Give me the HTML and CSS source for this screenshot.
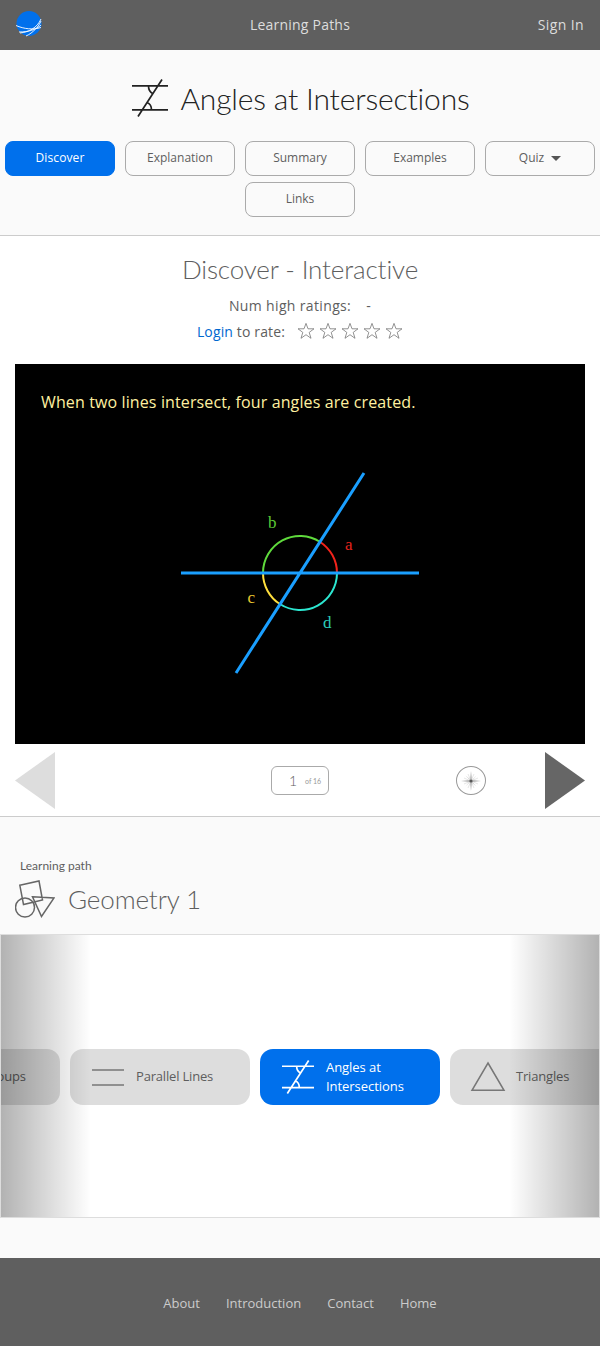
FILE: index.html
```html
<!DOCTYPE html>
<html lang="en">
<head>
<meta charset="utf-8">
<title>Angles at Intersections</title>
<link rel="stylesheet" href="styles.css">
</head>
<body>
<svg class="defs" width="0" height="0">
  <symbol id="angles" viewBox="0 0 36 38">
    <path d="M0 6.9H36M0 30.9H36M6 37.5L30 .5M16.500 7C16.500 10.500 18 13 20.500 14.500M19.500 31C19.500 28 18 24.500 15 23.500"/>
  </symbol>
  <symbol id="star" viewBox="0 0 18 18">
    <path d="M9 1.400L11 6.800H17L12.200 10.400L14 16.300L9 12.700L4 16.300L5.800 10.400L1 6.800H7Z"/>
  </symbol>
</svg>
<header class="topbar">
  <svg class="logo" viewBox="0 0 26 26">
    <circle cx="13" cy="12.500" r="12.500"/>
    <path d="M0 14.500C8 18 17 19 25 16.500M3 21C12 21 20 19 25 14M4 22C13 21 21 17 25 8M10 25C17 22 23 15 25 10"/>
  </svg>
  <a class="paths">Learning Paths</a>
  <a class="signin">Sign In</a>
</header>
<section class="intro">
  <div class="title"><svg class="title-icon"><use href="#angles"/></svg><h1>Angles at Intersections</h1></div>
  <nav class="tabs">
    <a class="tab active">Discover</a><a class="tab">Explanation</a><a class="tab">Summary</a><a class="tab">Examples</a><a class="tab">Quiz<i class="caret"></i></a><a class="tab">Links</a>
  </nav>
</section>
<main class="lesson">
  <h2>Discover - Interactive</h2>
  <p class="ratings"><span>Num high ratings:</span><span>-</span></p>
  <div class="rate"><span><a>Login</a> to rate:</span>
    <div class="stars"><svg><use href="#star"/></svg><svg><use href="#star"/></svg><svg><use href="#star"/></svg><svg><use href="#star"/></svg><svg><use href="#star"/></svg></div>
  </div>
  <svg class="diagram" viewBox="0 0 570 380">
    <text class="caption" x="26" y="44">When two lines intersect, four angles are created.</text>
    <g class="arcs">
      <path stroke="#f2231b" d="M322 209A37 37 0 0 0 305.150 177.970"/>
      <path stroke="#5fda3c" d="M305.150 177.970A37 37 0 0 0 248 209"/>
      <path stroke="#ffdf3d" d="M248 209A37 37 0 0 0 264.850 240.030"/>
      <path stroke="#2ce6d0" d="M264.850 240.030A37 37 0 0 0 322 209"/>
    </g>
    <path class="lines" d="M166 209H404M221 309L349 109"/>
    <g class="labels">
      <text x="330" y="186" fill="#e3231c">a</text>
      <text x="253" y="164" fill="#5bc936">b</text>
      <text x="232.500" y="239" fill="#e8c72f">c</text>
      <text x="308" y="264" fill="#2bcdb9">d</text>
    </g>
  </svg>
  <div class="controls">
    <svg class="arrow" viewBox="0 0 40 57"><path fill="#ddd" d="M0 28.500L40 0V57Z"/></svg>
    <div class="page"><span class="num">1</span><span class="of">of 16</span></div>
    <div class="compass">
      <svg viewBox="0 0 20 20"><path fill="#aaa" d="M10 0L10.900 9.100L20 10L10.900 10.900L10 20L9.100 10.900L0 10L9.100 9.100Z"/><path fill="#bbb" d="M4.500 4.500L10.600 9.400L15.500 4.500L10.600 10.600L15.500 15.500L9.400 10.600L4.500 15.500L9.400 9.400Z"/><path stroke="#ccc" stroke-width=".5" d="M7 3L13 17M13 3L7 17M3 7L17 13M3 13L17 7"/><circle cx="10" cy="10" r="1.600" fill="#555"/></svg>
    </div>
    <svg class="arrow next" viewBox="0 0 40 57"><path fill="#666" d="M40 28.500L0 0V57Z"/></svg>
  </div>
</main>
<section class="path">
  <p class="path-label">Learning path</p>
  <div class="path-title">
    <svg viewBox="0 0 40 38"><path d="M4.800 5.200L24 1L27.500 20L8.500 24.500ZM17.500 16.800L39 18L26.500 36.500Z"/><circle cx="10" cy="27.500" r="9.500"/></svg>
    <h2>Geometry 1</h2>
  </div>
  <div class="carousel">
    <div class="track">
      <a class="card"><svg></svg><span>Angle Groups</span></a>
      <a class="card"><svg viewBox="0 0 36 38"><path d="M2 12.100H34M2 26.900H34"/></svg><span>Parallel Lines</span></a>
      <a class="card current"><svg class="small" viewBox="0 0 36 38"><use href="#angles"/></svg><span>Angles at Intersections</span></a>
      <a class="card"><svg viewBox="0 0 36 38"><path d="M18 5L34 32.300H2Z"/></svg><span>Triangles</span></a>
    </div>
  </div>
</section>
<footer class="footer"><a>About</a><a>Introduction</a><a>Contact</a><a>Home</a></footer>
</body>
</html>
```
FILE: styles.css
```css
* { box-sizing: border-box; }
body { margin: 0; background: #fafafa; color: #5e5e5e; font: 14px/20px "Open Sans", sans-serif; font-variant-ligatures: none; }
h1, h2, p { margin: 0; }
svg { display: block; fill: none; flex: none; }
.defs { position: absolute; }
.topbar { display: grid; grid-template-columns: 1fr auto 1fr; align-items: center; height: 50px; padding: 0 16px; background: #5f5f5f; color: #ddd; letter-spacing: .22px; }
.logo { width: 26px; height: 26px; margin-bottom: 2px; }
.logo circle { fill: #0070ec; }
.logo path { stroke: #fff; stroke-width: .9; }
.signin { text-align: right; letter-spacing: .4px; }
.intro { height: 186px; padding-top: 29px; border-bottom: 1px solid #ccc; }
.title { display: flex; justify-content: center; gap: 12px; height: 62px; margin-left: 2px; }
.title-icon { width: 36px; height: 38px; stroke: #222; stroke-width: 1.700; }
.title h1 { margin-top: -1px; color: #222; font: 300 30px/40px Lato, sans-serif; font-variant-ligatures: none; letter-spacing: -.17px; white-space: nowrap; }
.tabs { display: flex; flex-wrap: wrap; justify-content: center; gap: 6px 10px; }
.tab { display: flex; align-items: center; justify-content: center; width: 110px; height: 35px; padding-bottom: 2px; border: 1px solid #aaa; border-radius: 8px; font-size: 12px; }
.tab.active { border-color: #0070ec; background: #0070ec; color: #fff; letter-spacing: .1px; }
.caret { margin: 1px 0 0 7px; border: 5px solid transparent; border-top-color: #555; border-bottom: 0; }
.lesson { height: 581px; padding: 13px 15px 0; border-bottom: 1px solid #ccc; background: #fff; }
.lesson h2 { height: 40px; text-align: center; font: 300 26px/40px Lato, sans-serif; font-variant-ligatures: none; letter-spacing: -.13px; }
.ratings { display: flex; justify-content: center; gap: 15px; margin-top: 7px; letter-spacing: .35px; }
.rate { display: flex; justify-content: center; gap: 12px; height: 20px; margin: 6px 0 22px; letter-spacing: .14px; }
.rate a { color: #0068d0; }
.stars { display: flex; gap: 4px; }
.stars svg { width: 18px; height: 18px; stroke: #777; stroke-width: .8; }
.diagram { width: 570px; height: 380px; background: #000; }
.caption { fill: #fff0a0; font-size: 16px; letter-spacing: .12px; }
.arcs { stroke-width: 2; }
.lines { stroke: #1a9fff; stroke-width: 3; }
.labels { font: 17px "Liberation Serif", serif; }
.controls { display: grid; grid-template-columns: 40px 216px 58px 127px 30px 59px 40px; align-items: center; height: 73px; }
.arrow { width: 40px; height: 57px; }
.next { grid-column: 7; }
.page { grid-column: 3; display: flex; align-items: center; width: 58px; height: 29px; padding-left: 17px; border: 1px solid #aaa; border-radius: 6px; font-family: Lato, sans-serif; }
.num { width: 16px; font-size: 14px; font-weight: 300; }
.of { color: #999; font-size: 7px; }
.compass { grid-column: 5; display: grid; place-items: center; width: 30px; height: 29px; border: 1px solid #999; border-radius: 50%; }
.compass svg { width: 20px; height: 20px; }
.path { padding-top: 39px; }
.path-label { padding-left: 20px; font: 12px/20px Lato, sans-serif; }
.path-title { display: flex; gap: 13px; height: 58px; padding: 4px 15px; }
.path-title svg { width: 40px; height: 38px; stroke: #666; stroke-width: 1.500; }
.path-title h2 { margin-top: -1px; font: 300 26px/40px Lato, sans-serif; letter-spacing: -.12px; }
.carousel { position: relative; display: flex; align-items: center; height: 284px; overflow: hidden; border: 1px solid #ddd; background: #fff; }
.carousel::after { content: ""; position: absolute; inset: 0; background: linear-gradient(90deg, rgba(0,0,0,.3), transparent 90px, transparent calc(100% - 90px), rgba(0,0,0,.3)); }
.track { display: flex; gap: 10px; margin: 1px 0 0 -121px; }
.card { display: flex; flex: none; align-items: center; gap: 10px; width: 180px; height: 56px; padding: 0 20px; border-radius: 13px; background: #ddd; font-size: 13px; line-height: 19px; letter-spacing: -.18px; }
.card svg { width: 36px; height: 38px; stroke: #777; stroke-width: 1.500; }
.card .small { width: 32px; height: 34px; margin: 0 2px; stroke-width: 1.900; }
.card.current { padding-top: 1px; background: #0070ec; color: #fff; letter-spacing: -.05px; }
.card.current svg { stroke: #fff; }
.footer { display: flex; justify-content: center; align-items: center; gap: 26px; height: 88px; margin-top: 40px; padding-top: 2px; background: #5f5f5f; color: #ccc; font-size: 13px; }
```
